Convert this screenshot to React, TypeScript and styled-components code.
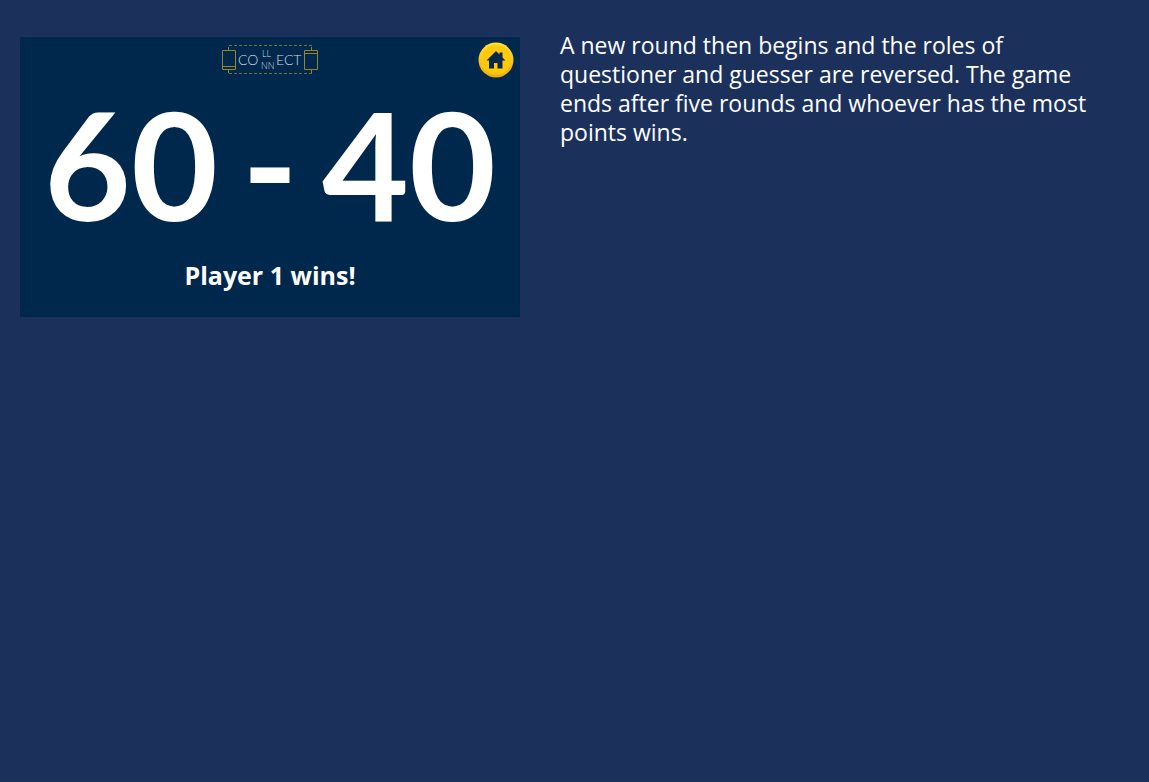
import React from "react";
import styled, { createGlobalStyle } from "styled-components";

const GlobalStyle = createGlobalStyle`
  body {
    margin: 0;
    background: #1b315b;
    color: #ffffff;
    font-family: "Trebuchet MS", "Open Sans", "Noto Sans", sans-serif;
  }
`;

const Page = styled.main`
  display: flex;
  flex-wrap: wrap;
  align-items: flex-start;
  gap: 40px;
  padding: 37px 40px 37px 20px;
`;

const Screen = styled.section`
  box-sizing: border-box;
  flex: 1 1 400px;
  max-width: 500px;
  padding: 5px 6px 24px;
  background: #00274c;
`;

const TopBar = styled.header`
  display: grid;
  grid-template-columns: 1fr auto 1fr;
  align-items: start;
`;

const Logo = styled.svg`
  grid-column: 2;
  display: block;
  width: 98px;
  height: 34px;
`;

const HomeButton = styled.button`
  justify-self: end;
  display: block;
  padding: 0;
  border: 0;
  background: none;
  cursor: pointer;

  svg {
    display: block;
    width: 36px;
    height: 36px;
  }
`;

const Score = styled.div`
  display: flex;
  justify-content: center;
  gap: 24px;
  margin-top: 9px;
  font-family: Lato, sans-serif;
  font-size: 150px;
  font-weight: 700;
  line-height: 152px;
`;

const Winner = styled.h1`
  margin: 18px 0 0;
  text-align: center;
  font-size: 25px;
  font-weight: 700;
  line-height: 36px;
`;

const Description = styled.p`
  flex: 1 1 400px;
  max-width: 549px;
  margin: -6px 0 0;
  font-size: 23px;
  font-weight: 500;
  line-height: 29px;
`;

const Lettering = styled.text<{ $size: number }>`
  font-family: Lato, sans-serif;
  font-size: ${(p) => p.$size}px;
  font-weight: 300;
  fill: #d3dde5;
`;

function ConnectLogo() {
  return (
    <Logo viewBox="0 0 98 34" role="img" aria-label="Collect Connect">
      <g fill="none" stroke="#94862a">
        <path d="M8 3.5H91M8 31.5H91" stroke="#6d7334" strokeDasharray="3 2" />
        <path d="M1.5 8.5H14.5V27.5H1.5ZM1.5 24.5H14.5M7.5 5V8M7.5 28V31" />
        <path d="M83.5 8.5H96.5V27.5H83.5ZM83.5 11.5H96.5M90.5 5V8M90.5 28V31" />
      </g>
      <Lettering $size={14} x="17" y="23">CO</Lettering>
      <Lettering $size={9} x="41" y="15">LL</Lettering>
      <Lettering $size={9} x="40" y="27">NN</Lettering>
      <Lettering $size={14} x="55" y="23">ECT</Lettering>
    </Logo>
  );
}

function HomeIcon() {
  return (
    <svg viewBox="0 0 36 36" aria-hidden="true">
      <defs>
        <linearGradient id="rim" x1="0" y1="0" x2="0" y2="1">
          <stop offset="0" stopColor="#ffe03a" />
          <stop offset="1" stopColor="#f2a90c" />
        </linearGradient>
      </defs>
      <circle cx="18" cy="18" r="17.5" fill="url(#rim)" />
      <circle cx="18" cy="18" r="15" fill="#ffc90c" />
      <path
        d="M18 9L8.5 18.5H11V26.5H16V21H19.5V26.5H24.5V18.5H27.5L24.5 15.5V10.5H21.5V12.5Z"
        fill="#06294b"
      />
    </svg>
  );
}

export default function App() {
  return (
    <>
      <GlobalStyle />
      <Page>
        <Screen>
          <TopBar>
            <ConnectLogo />
            <HomeButton type="button" aria-label="Home">
              <HomeIcon />
            </HomeButton>
          </TopBar>
          <Score>
            <span>60</span>
            <span>-</span>
            <span>40</span>
          </Score>
          <Winner>Player 1 wins!</Winner>
        </Screen>
        <Description>
          A new round then begins and the roles of questioner and guesser are
          reversed. The game ends after five rounds and whoever has the most
          points wins.
        </Description>
      </Page>
    </>
  );
}
